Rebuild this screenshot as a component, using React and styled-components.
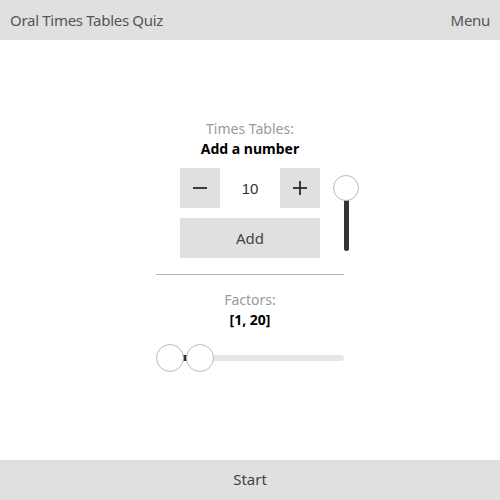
import React, { useState } from "react";
import styled, { createGlobalStyle } from "styled-components";

const GlobalStyle = createGlobalStyle`
	html, body {
		margin: 0;
		padding: 0;
		height: 100%;
		background: #ffffff;
		font-family: "Noto Sans", "Open Sans", sans-serif;
	}
	#root {
		height: 100%;
	}
`;

const Page = styled.div`
	height: 500px;
	display: flex;
	flex-direction: column;
`;

const TopBar = styled.header`
	height: 40px;
	flex: none;
	display: flex;
	align-items: center;
	justify-content: space-between;
	padding: 0 10px;
	background: #e0e0e0;
	color: #555555;
	font-size: 15px;
	letter-spacing: -0.3px;
`;

const Main = styled.main`
	flex: 1;
	display: flex;
	flex-direction: column;
	align-items: center;
	padding-top: 79px;
`;

const Label = styled.div`
	line-height: 20px;
	font-size: 14px;
	color: #9a9a9a;
	text-align: center;
`;

const Value = styled.div`
	line-height: 20px;
	font-size: 14px;
	font-weight: 700;
	color: #000000;
	text-align: center;
`;

const ControlsRow = styled.div`
	margin-top: 9px;
	display: flex;
	justify-content: center;
`;

const Spacer = styled.div`
	width: 39px;
`;

const StepperColumn = styled.div`
	width: 140px;
	display: flex;
	flex-direction: column;
	gap: 10px;
`;

const Stepper = styled.div`
	height: 40px;
	display: flex;
	background: #e0e0e0;
`;

const StepButton = styled.button`
	width: 40px;
	height: 40px;
	border: none;
	background: #e0e0e0;
	padding: 0;
	display: flex;
	align-items: center;
	justify-content: center;
	cursor: pointer;
`;

const NumberBox = styled.div`
	flex: 1;
	background: #ffffff;
	display: flex;
	align-items: center;
	justify-content: center;
	font-family: "Liberation Sans", Arial, sans-serif;
	font-size: 15px;
	color: #333333;
`;

const GreyButton = styled.button`
	height: 40px;
	border: none;
	background: #e0e0e0;
	color: #444444;
	font-family: inherit;
	font-size: 15px;
	cursor: pointer;
`;

const VerticalSlider = styled.div`
	margin-left: 13px;
	width: 26px;
	padding-top: 7px;
	display: flex;
	flex-direction: column;
	align-items: center;
`;

const Thumb = styled.div`
	width: 26px;
	height: 26px;
	box-sizing: border-box;
	border-radius: 50%;
	border: 1px solid #b8b8b8;
	background: #ffffff;
	position: relative;
	z-index: 2;
	flex: none;
`;

const VerticalTrack = styled.div`
	width: 5px;
	height: 52px;
	margin-top: -2px;
	background: #333333;
	border-radius: 0 0 3px 3px;
`;

const Divider = styled.hr`
	width: 188px;
	margin: 16px 0 15px;
	border: none;
	border-top: 1px solid #b5b5b5;
`;

const RangeSlider = styled.div`
	margin-top: 14px;
	width: 188px;
	height: 28px;
	position: relative;
	display: flex;
	align-items: center;
`;

const RangeTrack = styled.div`
	position: absolute;
	left: 14px;
	right: 0;
	top: 11px;
	height: 6px;
	border-radius: 3px;
	background: #e6e6e6;
`;

const RangeFill = styled.div`
	position: absolute;
	top: 11px;
	height: 6px;
	background: #333333;
`;

const RangeThumb = styled(Thumb)`
	position: absolute;
	top: 0;
	width: 28px;
	height: 28px;
`;

const BottomBar = styled.footer`
	height: 40px;
	box-sizing: border-box;
	padding-bottom: 2px;
	flex: none;
	display: flex;
	align-items: center;
	justify-content: center;
	background: #e0e0e0;
	color: #444444;
	font-size: 15px;
`;

const MinusIcon = () => (
	<svg width="16" height="16" viewBox="0 0 16 16">
		<line x1="1" y1="8" x2="15" y2="8" stroke="#2a2a2a" strokeWidth="1.8" />
	</svg>
);

const PlusIcon = () => (
	<svg width="16" height="16" viewBox="0 0 16 16">
		<line x1="1" y1="8" x2="15" y2="8" stroke="#2a2a2a" strokeWidth="1.8" />
		<line x1="8" y1="1" x2="8" y2="15" stroke="#2a2a2a" strokeWidth="1.8" />
	</svg>
);

const App = () => {
	const [num, setNum] = useState(10);
	const range = [1, 20];

	return (
		<Page>
			<GlobalStyle />
			<TopBar>
				<span>Oral Times Tables Quiz</span>
				<span>Menu</span>
			</TopBar>
			<Main>
				<Label>Times Tables:</Label>
				<Value>Add a number</Value>
				<ControlsRow>
					<Spacer />
					<StepperColumn>
						<Stepper>
							<StepButton onClick={() => setNum(num - 1)}>
								<MinusIcon />
							</StepButton>
							<NumberBox>{num}</NumberBox>
							<StepButton onClick={() => setNum(num + 1)}>
								<PlusIcon />
							</StepButton>
						</Stepper>
						<GreyButton>Add</GreyButton>
					</StepperColumn>
					<VerticalSlider>
						<Thumb />
						<VerticalTrack />
					</VerticalSlider>
				</ControlsRow>
				<Divider />
				<Label>Factors:</Label>
				<Value>[{range[0]}, {range[1]}]</Value>
				<RangeSlider>
					<RangeTrack />
					<RangeFill style={{ left: 26, width: 6 }} />
					<RangeThumb style={{ left: 0 }} />
					<RangeThumb style={{ left: 30 }} />
				</RangeSlider>
			</Main>
			<BottomBar>Start</BottomBar>
		</Page>
	);
};

export default App;
